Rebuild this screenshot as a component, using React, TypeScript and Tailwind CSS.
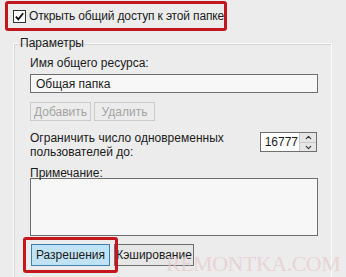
import { ChevronUp, ChevronDown } from "lucide-react";

export default function App() {
  return (
    <div className="relative w-[346px] h-[277px] overflow-hidden bg-[#ececec] text-[12px] leading-[14px] text-[#1b1b1b] font-['Liberation_Sans',Arial,sans-serif] whitespace-nowrap">
      <div className="relative flex flex-col">
        {/* share checkbox, highlighted */}
        <div className="ml-[5px] mt-[1px] w-[222px] h-[30px] border-[3px] border-[#c4161c] rounded-[3px] flex items-center pl-[5px] gap-[3px]">
          <div className="w-[13px] h-[13px] border border-[#333] bg-white flex items-center justify-center">
            <svg viewBox="0 0 12 12" className="w-[11px] h-[11px]">
              <path d="M2 6.2 L4.7 9 L10 2.5" fill="none" stroke="#111" strokeWidth="2" />
            </svg>
          </div>
          <span className="tracking-[-0.15px]">Открыть общий доступ к этой папке</span>
        </div>

        {/* settings group */}
        <fieldset className="ml-[13px] mt-[4px] w-[319px] h-[260px] border border-[#fbfbfb] shadow-[inset_1px_1px_0_#d6d6d6] pl-[16px] pr-[13px]">
          <legend className="-ml-[11px] px-[1px] leading-[16px]">Параметры</legend>

          <div className="mt-[5px]">Имя общего ресурса:</div>
          <div className="mt-[4px] h-[19px] border border-[#6e6e6e] bg-[#f7f7f7] px-[5px] flex items-center">
            Общая папка
          </div>

          <div className="mt-[9px] flex gap-[3px] text-[#a3a3a3]">
            <div className="w-[61px] h-[19px] border border-[#cacaca] flex items-center justify-center">Добавить</div>
            <div className="w-[61px] h-[19px] border border-[#cacaca] flex items-center justify-center">Удалить</div>
          </div>

          <div className="mt-[10px] flex items-start justify-between">
            <div>
              <div>Ограничить число одновременных</div>
              <div>пользователей до:</div>
            </div>
            <div className="mt-[1px] mr-[1px] flex h-[20px] border border-[#6e6e6e] bg-white">
              <div className="w-[38px] flex items-center justify-end pr-[1px] overflow-hidden">16777</div>
              <div className="w-[17px] flex flex-col bg-[#e6e6e6] border-l border-[#c8c8c8]">
                <div className="flex-1 flex items-center justify-center border-b border-[#c8c8c8]">
                  <ChevronUp className="w-[9px] h-[9px]" strokeWidth={3} color="#333" />
                </div>
                <div className="flex-1 flex items-center justify-center">
                  <ChevronDown className="w-[9px] h-[9px]" strokeWidth={3} color="#333" />
                </div>
              </div>
            </div>
          </div>

          <div className="mt-[7px]">Примечание:</div>
          <div className="mt-[-2px] h-[58px] border border-[#6e6e6e] bg-[#f7f7f7]"></div>

          <div className="mt-[8px] ml-[1px] flex items-center gap-[4px]">
            <div className="relative">
              <div className="w-[79px] h-[22px] border border-[#3c7fb1] bg-[#c0e2f5] flex items-center justify-center">
                Разрешения
              </div>
              {/* highlight overlay */}
              <div className="absolute -left-[8px] -top-[7px] w-[95px] h-[36px] border-[3px] border-[#c4161c] rounded-[3px]"></div>
            </div>
            <div className="w-[80px] h-[22px] border border-[#707070] bg-[#e6e6e6] flex items-center justify-center">
              Кэширование
            </div>
          </div>
        </fieldset>
      </div>

      {/* watermark over the shot */}
      <div className="pointer-events-none absolute left-[166px] top-[252px] text-[22px] leading-[24px] tracking-[-0.5px] text-[#e6caca]/70 font-['Liberation_Serif',serif]">
        REMONTKA.COM
      </div>
    </div>
  );
}
